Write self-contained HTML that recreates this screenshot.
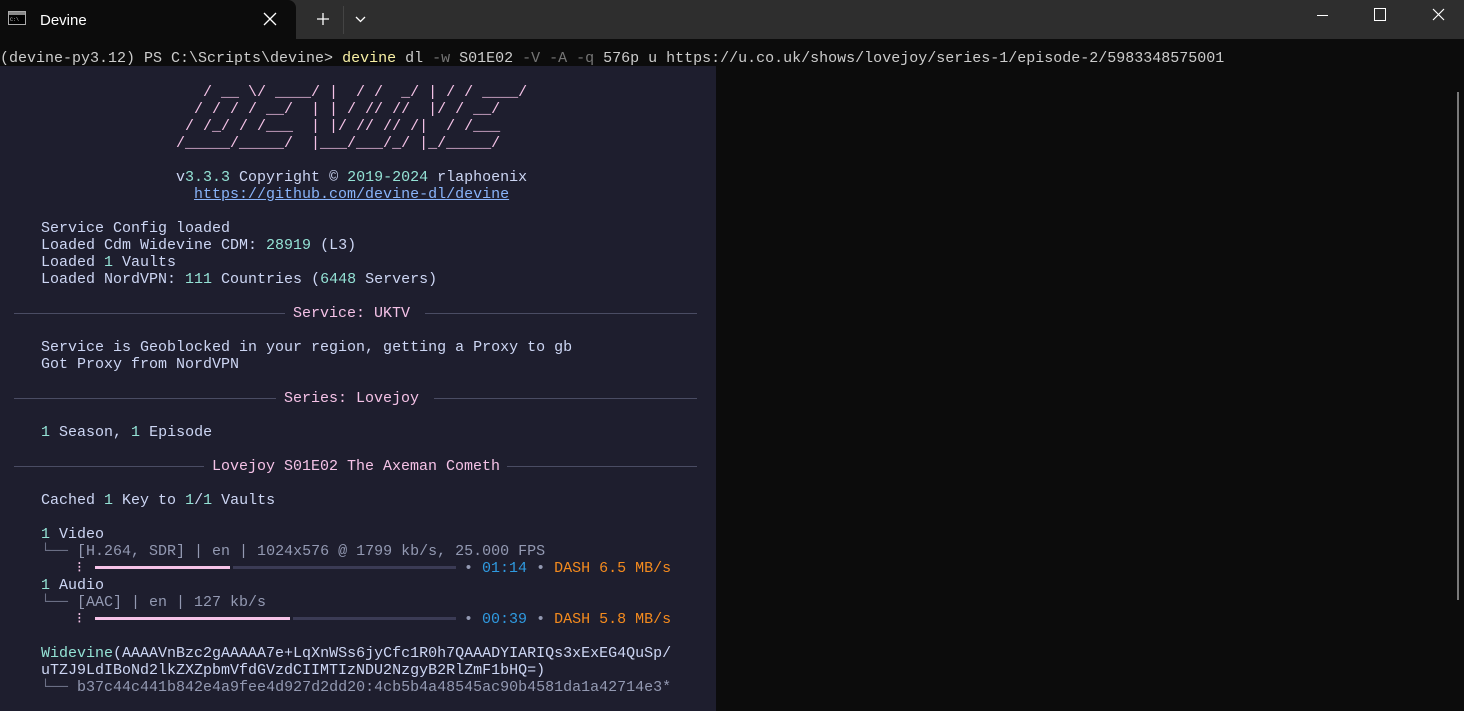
<!DOCTYPE html>
<html><head><meta charset="utf-8"><style>
*{margin:0;padding:0;box-sizing:border-box}
body{width:1464px;height:711px;background:#0c0c0c;overflow:hidden;position:relative;font-family:"Liberation Mono",monospace;font-size:15px;color:#cccccc}
.tb{position:absolute;left:0;top:0;width:1464px;height:39px;background:#2e2e2e}
.tab{position:absolute;left:0;top:0;width:296px;height:39px;background:#0c0c0c;border-top-right-radius:8px}
.tt{position:absolute;left:40px;top:12px;font-family:"Liberation Sans",sans-serif;font-size:15px;color:#fff}
.panel{position:absolute;left:0;top:66px;width:716px;height:645px;background:#1e1e2e}
.r{position:absolute;left:5px;height:17px;line-height:17px;white-space:pre;color:#cdd6f4}
.t{color:#94e2d5}.p{color:#f5c2e7}.g{color:#6c7086}.o{color:#f58b1e}.b{color:#2f9ae0}.s{color:#9399b2}
.rule{position:absolute;height:1px;background:#4a4c63;top:0}
.bar{position:absolute;height:3px}
</style></head><body>
<div class="tb"></div>
<div class="tab"></div>
<svg style="position:absolute;left:8px;top:11px" width="18" height="14"><rect x="0.5" y="0.5" width="17" height="13" fill="#000" stroke="#aaa"/><rect x="1" y="1" width="16" height="3" fill="#888"/><text x="2" y="10" font-size="5" fill="#ccc" font-family="Liberation Mono">C:\</text></svg>
<div class="tt">Devine</div>
<svg style="position:absolute;left:263px;top:12px" width="14" height="14"><path d="M1 1L13 13M13 1L1 13" stroke="#fff" stroke-width="1.3"/></svg>
<svg style="position:absolute;left:316px;top:12px" width="14" height="14"><path d="M7 1V13M1 7H13" stroke="#fff" stroke-width="1.3"/></svg>
<div style="position:absolute;left:343px;top:6px;width:1px;height:28px;background:#444"></div>
<svg style="position:absolute;left:355px;top:15px" width="11" height="8"><path d="M1 2L5.5 6.5L10 2" stroke="#fff" stroke-width="1.3" fill="none"/></svg>
<div style="position:absolute;left:1317px;top:15px;width:11px;height:1px;background:#fff"></div>
<div style="position:absolute;left:1374px;top:8px;width:12px;height:13px;border:1px solid #fff"></div>
<svg style="position:absolute;left:1432px;top:8px" width="13" height="13"><path d="M1 1L12 12M12 1L1 12" stroke="#fff" stroke-width="1.2"/></svg>
<div style="position:absolute;left:1457px;top:92px;width:2px;height:508px;background:#7a7a7a"></div>

<div class="r" style="left:0;top:50px;color:#cccccc">(devine-py3.12) PS C:\Scripts\devine&gt; <span style="color:#f9f1a5">devine</span> dl <span style="color:#767676">-w</span> S01E02 <span style="color:#767676">-V -A -q</span> 576p u https://u.co.uk/shows/lovejoy/series-1/episode-2/5983348575001</div>

<div class="panel"></div>
<div class="r p" style="top:84px">                      / __ \/ ____/ |  / /  _/ | / / ____/</div>
<div class="r p" style="top:101px">                     / / / / __/  | | / // //  |/ / __/</div>
<div class="r p" style="top:118px">                    / /_/ / /___  | |/ // // /|  / /___</div>
<div class="r p" style="top:135px">                   /_____/_____/  |___/___/_/ |_/_____/</div>
<div class="r" style="top:169px">                   v<span class="t">3.3.3</span> Copyright © <span class="t">2019-2024</span> rlaphoenix</div>
<div class="r" style="top:186px">                     <span style="color:#89b4fa;text-decoration:underline">https://github.com/devine-dl/devine</span></div>
<div class="r" style="top:220px">    Service Config loaded</div>
<div class="r" style="top:237px">    Loaded Cdm Widevine CDM: <span class="t">28919</span> (L3)</div>
<div class="r" style="top:254px">    Loaded <span class="t">1</span> Vaults</div>
<div class="r" style="top:271px">    Loaded NordVPN: <span class="t">111</span> Countries (<span class="t">6448</span> Servers)</div>

<div class="rule" style="left:14px;width:271px;top:313px"></div><div class="rule" style="left:425px;width:272px;top:313px"></div>
<div class="r p" style="top:305px;left:293px">Service: UKTV</div>
<div class="r" style="top:339px">    Service is Geoblocked in your region, getting a Proxy to gb</div>
<div class="r" style="top:356px">    Got Proxy from NordVPN</div>
<div class="rule" style="left:14px;width:262px;top:398px"></div><div class="rule" style="left:434px;width:263px;top:398px"></div>
<div class="r p" style="top:390px;left:284px">Series: Lovejoy</div>
<div class="r" style="top:424px">    <span class="t">1</span> Season, <span class="t">1</span> Episode</div>
<div class="rule" style="left:14px;width:190px;top:466px"></div><div class="rule" style="left:507px;width:190px;top:466px"></div>
<div class="r p" style="top:458px;left:212px">Lovejoy S01E02 The Axeman Cometh</div>
<div class="r" style="top:492px">    Cached <span class="t">1</span> Key to <span class="t">1</span>/<span class="t">1</span> Vaults</div>

<div class="r" style="top:526px">    <span class="t">1</span> Video</div>
<div class="r s" style="top:543px">    <span class="g">└──</span> [H.264, SDR] | en | 1024x576 @ 1799 kb/s, 25.000 FPS</div>
<div class="r" style="top:560px">        <span class="p">⁝</span></div>
<div class="bar" style="left:95px;width:135px;top:566px;background:#f5c2e7"></div>
<div class="bar" style="left:233px;width:223px;top:566px;background:#3b3b55"></div>
<div class="r" style="top:560px;left:464px"><span class="s">•</span> <span class="b">01:14</span> <span class="s">•</span> <span class="o">DASH 6.5 MB/s</span></div>
<div class="r" style="top:577px">    <span class="t">1</span> Audio</div>
<div class="r s" style="top:594px">    <span class="g">└──</span> [AAC] | en | 127 kb/s</div>
<div class="r" style="top:611px">        <span class="p">⁝</span></div>
<div class="bar" style="left:95px;width:195px;top:617px;background:#f5c2e7"></div>
<div class="bar" style="left:293px;width:163px;top:617px;background:#3b3b55"></div>
<div class="r" style="top:611px;left:464px"><span class="s">•</span> <span class="b">00:39</span> <span class="s">•</span> <span class="o">DASH 5.8 MB/s</span></div>

<div class="r" style="top:645px">    <span class="t">Widevine</span>(AAAAVnBzc2gAAAAA7e+LqXnWSs6jyCfc1R0h7QAAADYIARIQs3xExEG4QuSp/</div>
<div class="r" style="top:662px">    uTZJ9LdIBoNd2lkZXZpbmVfdGVzdCIIMTIzNDU2NzgyB2RlZmF1bHQ=)</div>
<div class="r s" style="top:679px">    <span class="g">└──</span> b37c44c441b842e4a9fee4d927d2dd20:4cb5b4a48545ac90b4581da1a42714e3*</div>
</body></html>
